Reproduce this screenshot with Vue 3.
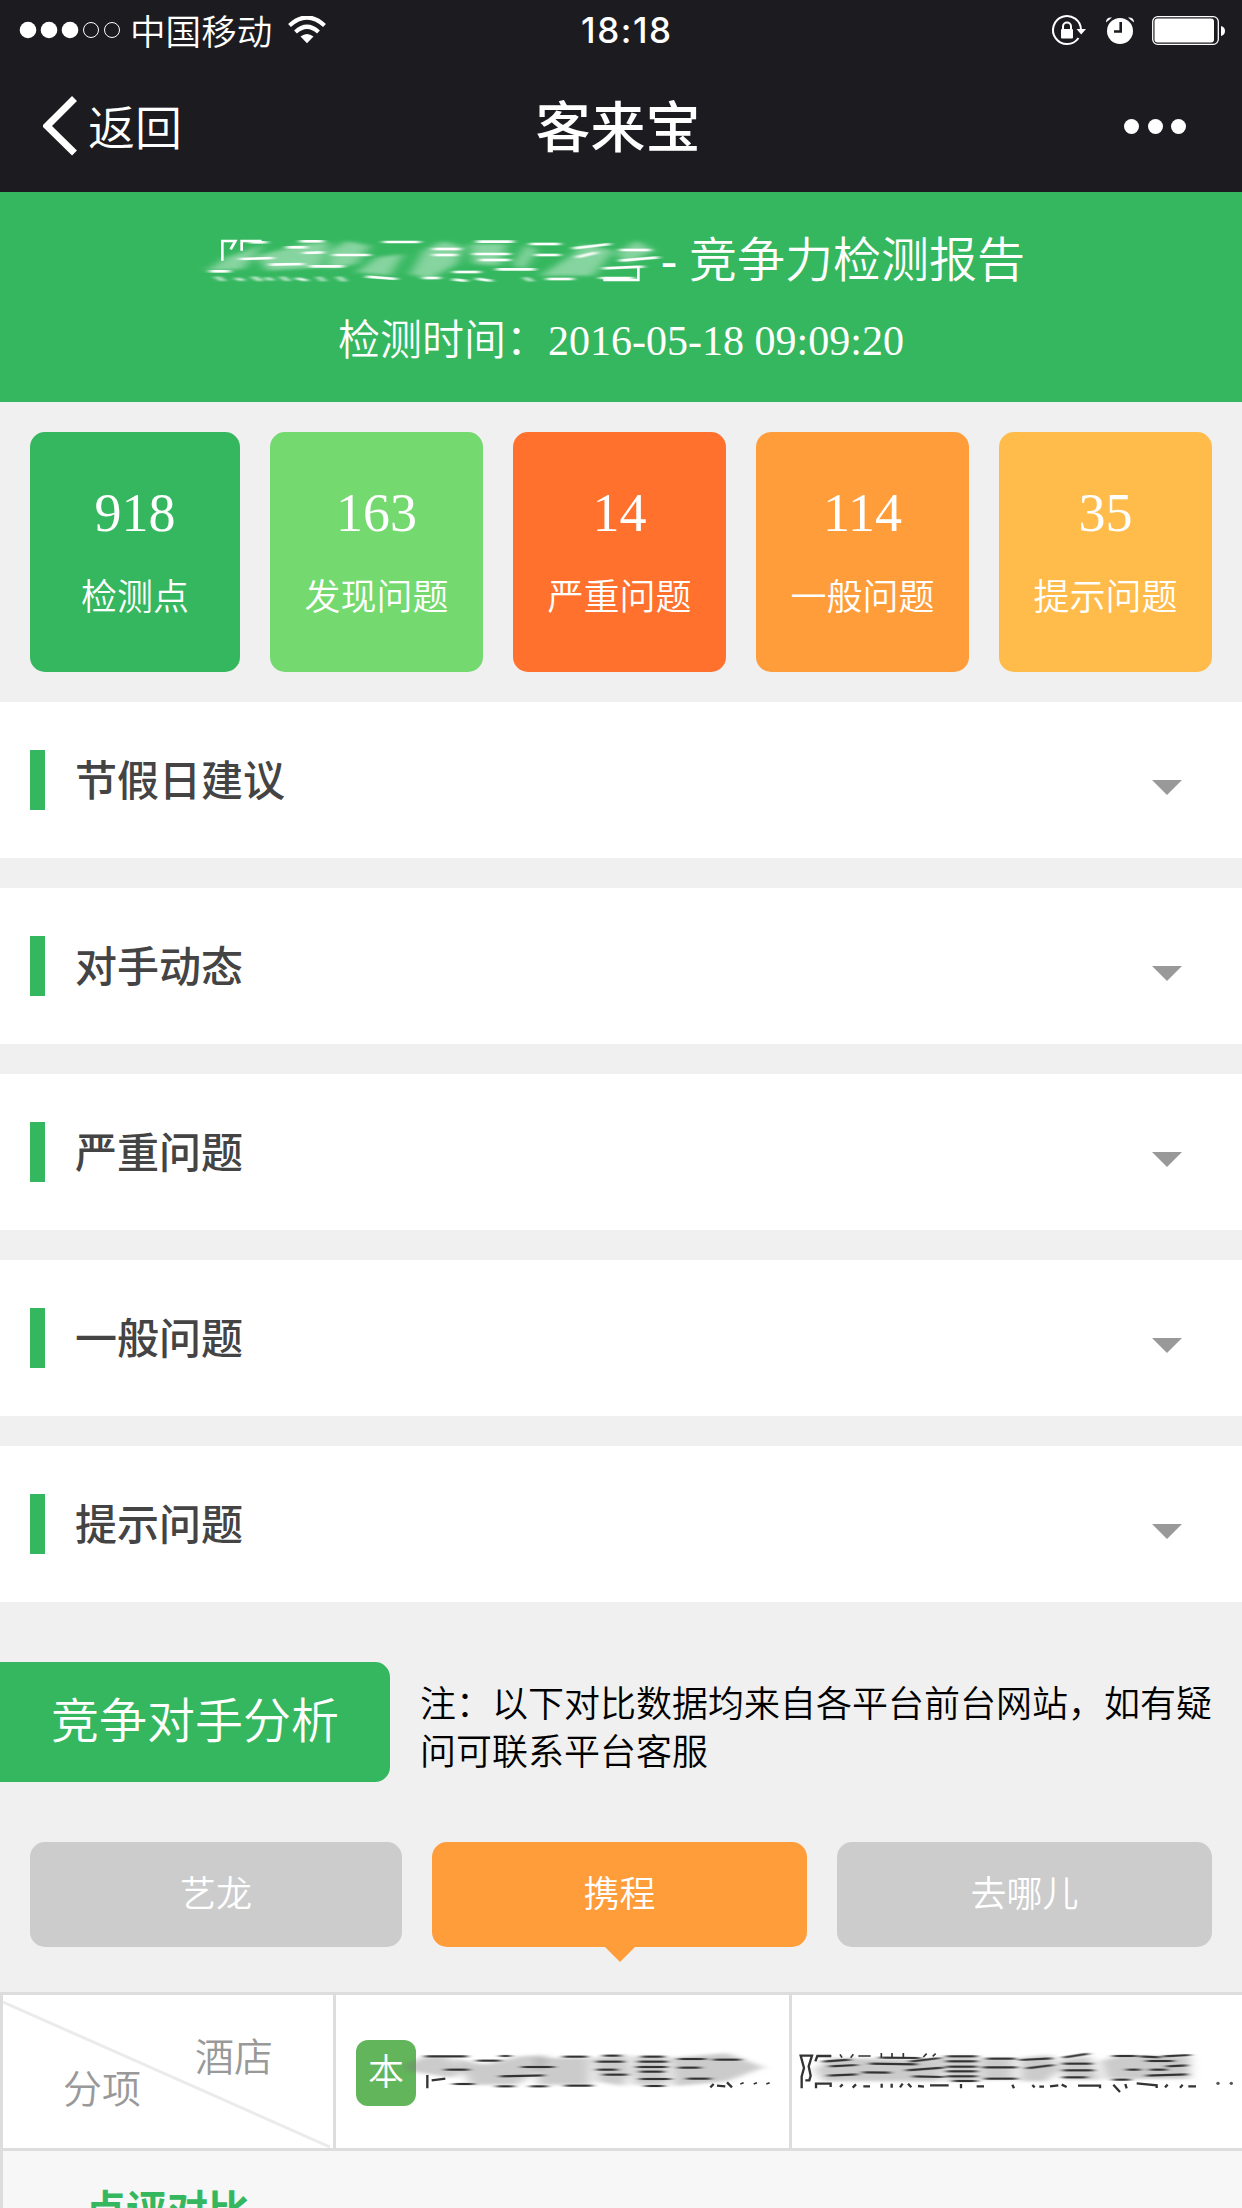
<template>
  <div class="page">
    <header class="top">
      <div class="status">
        <svg class="signal" width="104" height="20" viewBox="0 0 104 20">
          <circle
            v-for="n in 5"
            :key="n"
            :cx="n * 21 - 12"
            cy="10"
            :r="n > 3 ? 7.5 : 8.3"
            :class="{ hollow: n > 3 }"
          />
        </svg>
        <span class="carrier">中国移动</span>
        <svg class="wifi" width="38" height="28" viewBox="0 0 38 28">
          <path d="M1.5 9.5Q19-6.500 36.500 9.500" class="arc" />
          <path d="M7.500 16Q19 5.500 30.500 16" class="arc" />
          <path d="M12.500 20.500Q19 15.500 25.500 20.500L19 27.200Z" />
        </svg>
        <span class="time">18:18</span>
        <svg class="indicators" width="180" height="40" viewBox="1050 10 180 40">
          <path d="M1078.500 38A14 14 0 1 1 1081 30" class="ring" />
          <path d="M1076.500 29H1086L1081.200 34.500Z" />
          <rect x="1061" y="29" width="12" height="9.500" rx="1" />
          <path d="M1063 30V26.500A4 4 0 0 1 1071 26.500V30" class="shackle" />
          <circle cx="1120" cy="31" r="13" />
          <path d="M1106 22.500Q1106 17 1112 17.500ZM1134 22.500Q1134 17 1128 17.500Z" />
          <path d="M1120.700 22V31.500H1114" class="hands" />
          <rect x="1152.700" y="16.700" width="65.600" height="27.600" rx="5" class="shell" />
          <rect x="1154.500" y="18.500" width="59.500" height="24" rx="3" />
          <path d="M1221 26Q1225 27 1225 31T1221 36Z" />
        </svg>
      </div>
      <nav class="nav">
        <div class="back">
          <svg width="36" height="62" viewBox="0 0 36 62">
            <path d="M31.500 3.500L4 31L31.500 58" />
          </svg>
          <span>返回</span>
        </div>
        <h1>客来宝</h1>
        <div class="more"><i v-for="n in 3" :key="n"></i></div>
      </nav>
    </header>

    <section class="report">
      <div class="report-title">
        <svg class="smear light" width="460" height="50" viewBox="30 100 1380 150">
          <g class="haze">
            <path v-for="(d, i) in titleHaze" :key="i" :d="d" />
          </g>
          <g class="streaks">
            <path v-for="(d, i) in titleStreaks" :key="i" :d="d" />
          </g>
          <path class="sharp" d="M97 180V121H136L122 146M155 150V121H215" />
          <path class="sharp" d="M1240 238H1345V200" />
        </svg>
        <span>- 竞争力检测报告</span>
      </div>
      <p>检测时间：2016-05-18 09:09:20</p>
    </section>

    <section class="stats">
      <div v-for="stat in stats" :key="stat.label" class="stat" :class="stat.type">
        <strong>{{ stat.count }}</strong>
        <span>{{ stat.label }}</span>
      </div>
    </section>

    <section
      v-for="panel in panels"
      :key="panel"
      class="panel"
      @click="toggle(panel)"
    >
      <h2><span>{{ panel }}</span></h2>
      <i class="caret" :class="{ open: opened === panel }"></i>
    </section>

    <section class="analysis">
      <h3>竞争对手分析</h3>
      <p>注：以下对比数据均来自各平台前台网站，如有疑问可联系平台客服</p>
    </section>

    <div class="tabs">
      <div
        v-for="tab in tabs"
        :key="tab"
        class="tab"
        :class="{ active: tab === activeTab }"
        @click="activeTab = tab"
      >{{ tab }}</div>
    </div>

    <section class="compare">
      <div class="row">
        <div class="cell corner">
          <svg class="diagonal" width="330" height="153" viewBox="0 0 330 153">
            <path d="M0 7L327 152" />
          </svg>
          <span class="item">分项</span>
          <span class="hotel">酒店</span>
        </div>
        <div class="cell own">
          <span class="badge">本</span>
          <svg class="smear dark" width="376" height="50" viewBox="215 235 1128 150">
            <g class="haze">
              <path v-for="(d, i) in ownHaze" :key="i" :d="d" />
            </g>
            <g class="streaks">
              <path v-for="(d, i) in ownStreaks" :key="i" :d="d" />
            </g>
            <path class="sharp" d="M291 356V316M304 332L345 327M1140 353L1150 343M1160 348L1185 350M1190 338L1205 353" />
            <path class="sharp dots" d="M1230 343L1240 339M1270 343L1280 339M1308 343L1318 339" />
          </svg>
        </div>
        <div class="cell rival">
          <svg class="smear dark" width="446" height="50" viewBox="48 235 1338 150">
            <g class="haze">
              <path v-for="(d, i) in rivalHaze" :key="i" :d="d" />
            </g>
            <g class="streaks">
              <path v-for="(d, i) in rivalStreaks" :key="i" :d="d" />
            </g>
            <path class="sharp" d="M65 356V320L72 295L62 258H96L86 290L92 318L88 332H76M108 356V342H152V352M106 275L112 259H154" />
            <path class="sharp" d="M180 352L188 344M218 354L228 344M250 350H270M305 342V354M335 342V354M360 353L368 342M384 342L394 353M414 349L432 351M450 347H506M543 343V356M590 350H612M697 345L702 356M757 346L764 353M778 351H792M810 350L835 347M845 345L860 352M894 348H960V356M1000 345L1020 367M1036 343L1040 356M1070 341L1130 347V355M1155 353L1163 345M1200 354L1208 345M1225 350H1248" />
            <path class="sharp thin" d="M180 254L186 264M212 264L220 254M235 259H272M304 250V264M336 250V264M370 250V264M430 262L440 252M458 260L467 252" />
            <circle cx="1314" cy="341" r="5" />
            <circle cx="1354" cy="341" r="5" />
          </svg>
        </div>
      </div>
      <div class="group">点评对比</div>
    </section>

    <!-- horizontal smudge used to hide hotel names -->
    <svg class="defs" width="0" height="0">
      <filter id="haze" x="-10%" y="-30%" width="120%" height="160%">
        <feGaussianBlur stdDeviation="16 4" />
      </filter>
      <filter id="streak" x="-10%" y="-30%" width="120%" height="160%">
        <feGaussianBlur stdDeviation="9 1" />
      </filter>
    </svg>
  </div>
</template>

<script setup>
  import { ref } from 'vue';

  const stats = [
    { count: 918, label: '检测点', type: 'total' },
    { count: 163, label: '发现问题', type: 'found' },
    { count: 14, label: '严重问题', type: 'serious' },
    { count: 114, label: '一般问题', type: 'normal' },
    { count: 35, label: '提示问题', type: 'hint' }
  ];

  const panels = ['节假日建议', '对手动态', '严重问题', '一般问题', '提示问题'];
  const opened = ref('');

  const tabs = ['艺龙', '携程', '去哪儿'];
  const activeTab = ref('携程');

  const toggle = (panel) => {
    opened.value = opened.value === panel ? '' : panel;
  };

  const titleHaze = [
    'M50 210L110 170L170 150L220 130L160 205Z',
    'M200 165L340 130L420 125L390 200L230 210Z',
    'M420 150L470 120L540 135L500 190L410 205Z',
    'M500 215L560 170L640 160L600 225Z',
    'M700 150L760 120L820 140L800 190L720 235L660 220Z',
    'M840 130H950L930 195L850 190Z',
    'M970 190L1010 130L1040 150L1000 210Z',
    'M1050 225L1150 160L1180 130L1270 150L1210 225Z',
    'M1280 160L1340 118L1390 150L1310 190Z'
  ];
  const titleStreaks = [
    'M60 212H120', 'M150 175L250 172', 'M290 140H350', 'M330 122H400', 'M180 125H230',
    'M240 192L340 190', 'M360 197H460', 'M340 157L400 155', 'M430 163H540', 'M580 124H690',
    'M730 145H810', 'M730 163H800', 'M860 123H970', 'M850 160H960', 'M870 178H960',
    'M920 206H1035', 'M790 214H870', 'M700 232H750', 'M530 228L620 235', 'M1020 130H1110',
    'M1035 163H1110', 'M1150 143L1260 130', 'M1160 170L1220 155', 'M1290 148H1380',
    'M1290 180L1405 170', 'M1240 203L1360 198', 'M1070 235H1150', 'M1230 232H1330',
    'M80 228L100 241', 'M140 232L158 240', 'M190 228L212 241', 'M230 230L246 240',
    'M275 228L295 241', 'M320 232L350 240', 'M385 228L402 242', 'M445 228L463 242',
    'M790 236L830 241', 'M860 234L905 241', 'M1005 230L1025 242'
  ];
  const ownHaze = [
    'M222 285L280 262H350L400 300L370 325L230 303Z',
    'M370 265L460 285L570 260L650 255L630 300L560 345L420 345Z',
    'M620 265H780V345H620Z',
    'M790 265L890 255L900 310L880 350L800 335Z',
    'M910 260H1010V345H910Z',
    'M1020 265L1190 250L1300 293L1190 335L1030 350Z'
  ];
  const ownStreaks = [
    'M285 260H410', 'M345 300H415', 'M440 273H510', 'M510 259H540', 'M575 292H670',
    'M510 320L640 317', 'M700 261H770', 'M705 348H785', 'M800 276H880', 'M820 258H870',
    'M820 315H890', 'M800 300H860', 'M935 261H1000', 'M925 276H1010', 'M920 292H1010',
    'M930 306H1000', 'M930 328H1020', 'M1045 268H1125', 'M1045 294H1110', 'M1070 327H1140',
    'M1150 270H1230', 'M370 343H430', 'M500 350H550', 'M600 350H650', 'M945 349H1000'
  ];
  const rivalHaze = [
    'M105 300L150 265L450 270L500 260L480 335L130 335Z',
    'M500 260H590V335H500Z',
    'M600 265H700V330H600Z',
    'M720 265L810 255L840 300L800 335H720Z',
    'M840 270L930 260L960 330H850Z',
    'M960 275L1010 260H1230V328H980Z'
  ];
  const rivalStreaks = [
    'M130 276L210 270', 'M150 290L230 286', 'M145 318L230 314', 'M250 308L330 309',
    'M270 282L410 284', 'M300 264L420 265', 'M390 276L480 265', 'M380 302L490 294',
    'M400 320L490 322', 'M500 260H590', 'M500 275H590', 'M500 291H590', 'M500 305H590',
    'M500 320H590', 'M520 334H590', 'M620 267H705', 'M610 293H710', 'M615 327H710',
    'M720 271L815 266', 'M740 296L820 286', 'M850 264L925 252', 'M850 282H935',
    'M850 302H940', 'M850 323H920', 'M1000 259H1070', 'M1040 300H1080', 'M1080 260L1140 263',
    'M1100 274H1180', 'M1150 260L1230 256', 'M1160 290L1220 287', 'M1100 318L1220 314',
    'M1110 300H1160', 'M1000 330H1050'
  ];
</script>

<style>
  body {
    margin: 0;
    background: #f0f0f0;
  }
</style>

<style scoped>
  .page {
    height: 2208px;
    overflow: hidden;
    background: #f0f0f0;
    font-family: "Liberation Serif", "Noto Sans CJK SC", serif;
    font-weight: 350;
  }
  h1, h2, h3, p {
    margin: 0;
  }
  svg {
    display: block;
    flex: none;
  }

  .top {
    height: 192px;
    background: #1c1b20;
    color: #fff;
    font-family: "Noto Sans CJK SC", sans-serif;
  }
  .status {
    display: flex;
    align-items: center;
    height: 60px;
    padding: 0 12px 0 19px;
  }
  .status svg {
    fill: #fff;
  }
  .signal .hollow {
    fill: none;
    stroke: #fff;
    stroke-width: 1;
  }
  .carrier {
    width: 143px;
    margin-left: 7px;
    font-size: 35.6px;
    line-height: 56px;
    white-space: nowrap;
  }
  .wifi {
    margin-left: 15px;
  }
  .wifi .arc {
    fill: none;
    stroke: #fff;
    stroke-width: 4.200;
  }
  .time {
    margin-left: 255px;
    width: 96px;
    font: 500 35px/62px Inter, sans-serif;
    letter-spacing: 1.600px;
    white-space: nowrap;
  }
  .indicators {
    margin-left: auto;
  }
  .indicators .ring,
  .indicators .shackle,
  .indicators .shell {
    fill: none;
    stroke: #fff;
    stroke-width: 2;
  }
  .indicators .shell {
    stroke-width: 1.300;
  }
  .indicators .hands {
    fill: none;
    stroke: #1c1b20;
    stroke-width: 2.600;
  }
  .nav {
    display: grid;
    grid-template-columns: 1fr auto 1fr;
    align-items: center;
    height: 132px;
    padding: 0 56px 0 43px;
  }
  .back {
    display: flex;
    align-items: center;
    gap: 9px;
    font-size: 47px;
    line-height: 130px;
  }
  .back span {
    margin-top: -2px;
  }
  .back path {
    fill: none;
    stroke: #fff;
    stroke-width: 7;
  }
  .nav h1 {
    margin: 0 0 6px 7px;
    font-size: 55px;
    font-weight: 500;
    line-height: 126px;
  }
  .more {
    display: flex;
    justify-content: flex-end;
    gap: 8.500px;
  }
  .more i {
    width: 15px;
    height: 15px;
    border-radius: 50%;
    background: #fff;
  }

  .report {
    height: 210px;
    background: #35b75f;
    color: #fff;
  }
  .report-title {
    display: flex;
    align-items: center;
    height: 100px;
    padding: 17px 0 0 200px;
    font-size: 48px;
    line-height: 100px;
    white-space: nowrap;
  }
  .report-title span {
    margin: 3px 0 0 1px;
  }
  .report p {
    margin-top: 1px;
    font-size: 42px;
    line-height: 62px;
    text-align: center;
  }

  .smear {
    overflow: visible;
  }
  .smear path {
    fill: none;
    stroke-width: 6;
  }
  .smear .haze {
    filter: url(#haze);
  }
  .smear .streaks {
    filter: url(#streak);
  }
  .light path {
    stroke: #fff;
  }
  .light .haze path {
    fill: #fff;
    stroke: none;
    opacity: .4;
  }
  .light .streaks path {
    stroke-width: 8;
  }
  .light .sharp {
    stroke-width: 8;
  }
  .dark path {
    stroke: #333;
  }
  .dark circle {
    fill: #555;
  }
  .dark .haze path {
    fill: #777;
    stroke: none;
    opacity: .38;
  }
  .dark .streaks path {
    stroke-width: 6.500;
  }
  .dark .sharp {
    stroke-width: 7;
  }
  .dark .dots,
  .dark .thin {
    stroke-width: 5;
  }

  .stats {
    display: grid;
    grid-template-columns: 210px repeat(4, 213px);
    gap: 30px;
    padding: 30px;
  }
  .stat {
    display: flex;
    flex-direction: column;
    align-items: center;
    height: 240px;
    border-radius: 15px;
    color: #fff;
  }
  .stat strong {
    margin-top: 41px;
    font-size: 54px;
    font-weight: 400;
    line-height: 80px;
  }
  .stat span {
    margin-top: 15px;
    font-size: 36px;
    line-height: 60px;
  }
  .total {
    background: #35b75f;
  }
  .found {
    background: #74d96f;
  }
  .serious {
    background: #ff712c;
  }
  .normal {
    background: #ff9d3b;
  }
  .hint {
    background: #ffbc4b;
  }

  .panel {
    display: flex;
    align-items: center;
    justify-content: space-between;
    height: 156px;
    margin-bottom: 30px;
    padding: 0 60px 0 30px;
    background: #fff;
  }
  .panel h2 {
    height: 60px;
    padding-left: 30px;
    border-left: 15px solid #35b75f;
    color: #444;
    font-size: 42px;
    font-weight: 500;
    line-height: 64px;
  }
  .caret {
    margin-top: 15px;
    border: 15px solid transparent;
    border-top-color: #999;
    border-bottom-width: 0;
  }
  .caret.open {
    transform: rotate(180deg);
  }

  .analysis {
    display: flex;
    align-items: flex-start;
    gap: 30px;
    padding: 30px 30px 0 0;
  }
  .analysis h3 {
    flex: none;
    width: 390px;
    border-radius: 0 15px 15px 0;
    background: #35b75f;
    color: #fff;
    font-size: 48px;
    font-weight: 350;
    line-height: 120px;
    text-align: center;
  }
  .analysis p {
    padding-top: 19px;
    color: #000;
    font-size: 36px;
    line-height: 48px;
  }

  .tabs {
    display: grid;
    grid-template-columns: 372px 375px 375px;
    gap: 30px;
    padding: 60px 30px 45px;
  }
  .tab {
    position: relative;
    height: 105px;
    border-radius: 15px;
    background: #ccc;
    color: #fff;
    font-size: 36px;
    line-height: 106px;
    text-align: center;
  }
  .tab.active {
    background: #ff9d3b;
  }
  .tab.active::after {
    content: "";
    position: absolute;
    top: 105px;
    left: 50%;
    margin-left: -15px;
    border: 15px solid transparent;
    border-top-color: #ff9d3b;
    border-bottom-width: 0;
  }

  .compare {
    border-top: 3px solid #ddd;
    border-left: 3px solid #ddd;
    background: #f7f7f7;
  }
  .row {
    display: grid;
    grid-template-columns: 333px 456px 1fr;
    height: 153px;
    border-bottom: 3px solid #ddd;
    background: #fff;
  }
  .cell {
    display: flex;
    align-items: center;
    border-right: 3px solid #ddd;
  }
  .corner {
    position: relative;
    align-items: flex-start;
    padding-left: 60px;
    color: #999;
    font-size: 39px;
    line-height: 60px;
  }
  .item {
    margin-top: 65px;
  }
  .hotel {
    margin: 33px 0 0 54px;
  }
  .diagonal {
    position: absolute;
    top: 0;
    left: 0;
    fill: none;
    stroke: #ebebed;
    stroke-width: 3;
  }
  .badge {
    flex: none;
    width: 60px;
    margin: 2px 0 0 20px;
    border-radius: 12px;
    background: #62b55a;
    color: #fff;
    font-size: 36px;
    line-height: 66px;
    text-align: center;
  }
  .own .smear {
    margin: 3px 0 0 -14px;
  }
  .rival {
    overflow: hidden;
    border-right: 0;
  }
  .rival .smear {
    margin: 3px 0 0 4px;
  }
  .group {
    padding: 30px 0 0 82px;
    color: #35b75f;
    font-size: 41px;
    font-weight: 700;
    line-height: 60px;
  }
</style>
